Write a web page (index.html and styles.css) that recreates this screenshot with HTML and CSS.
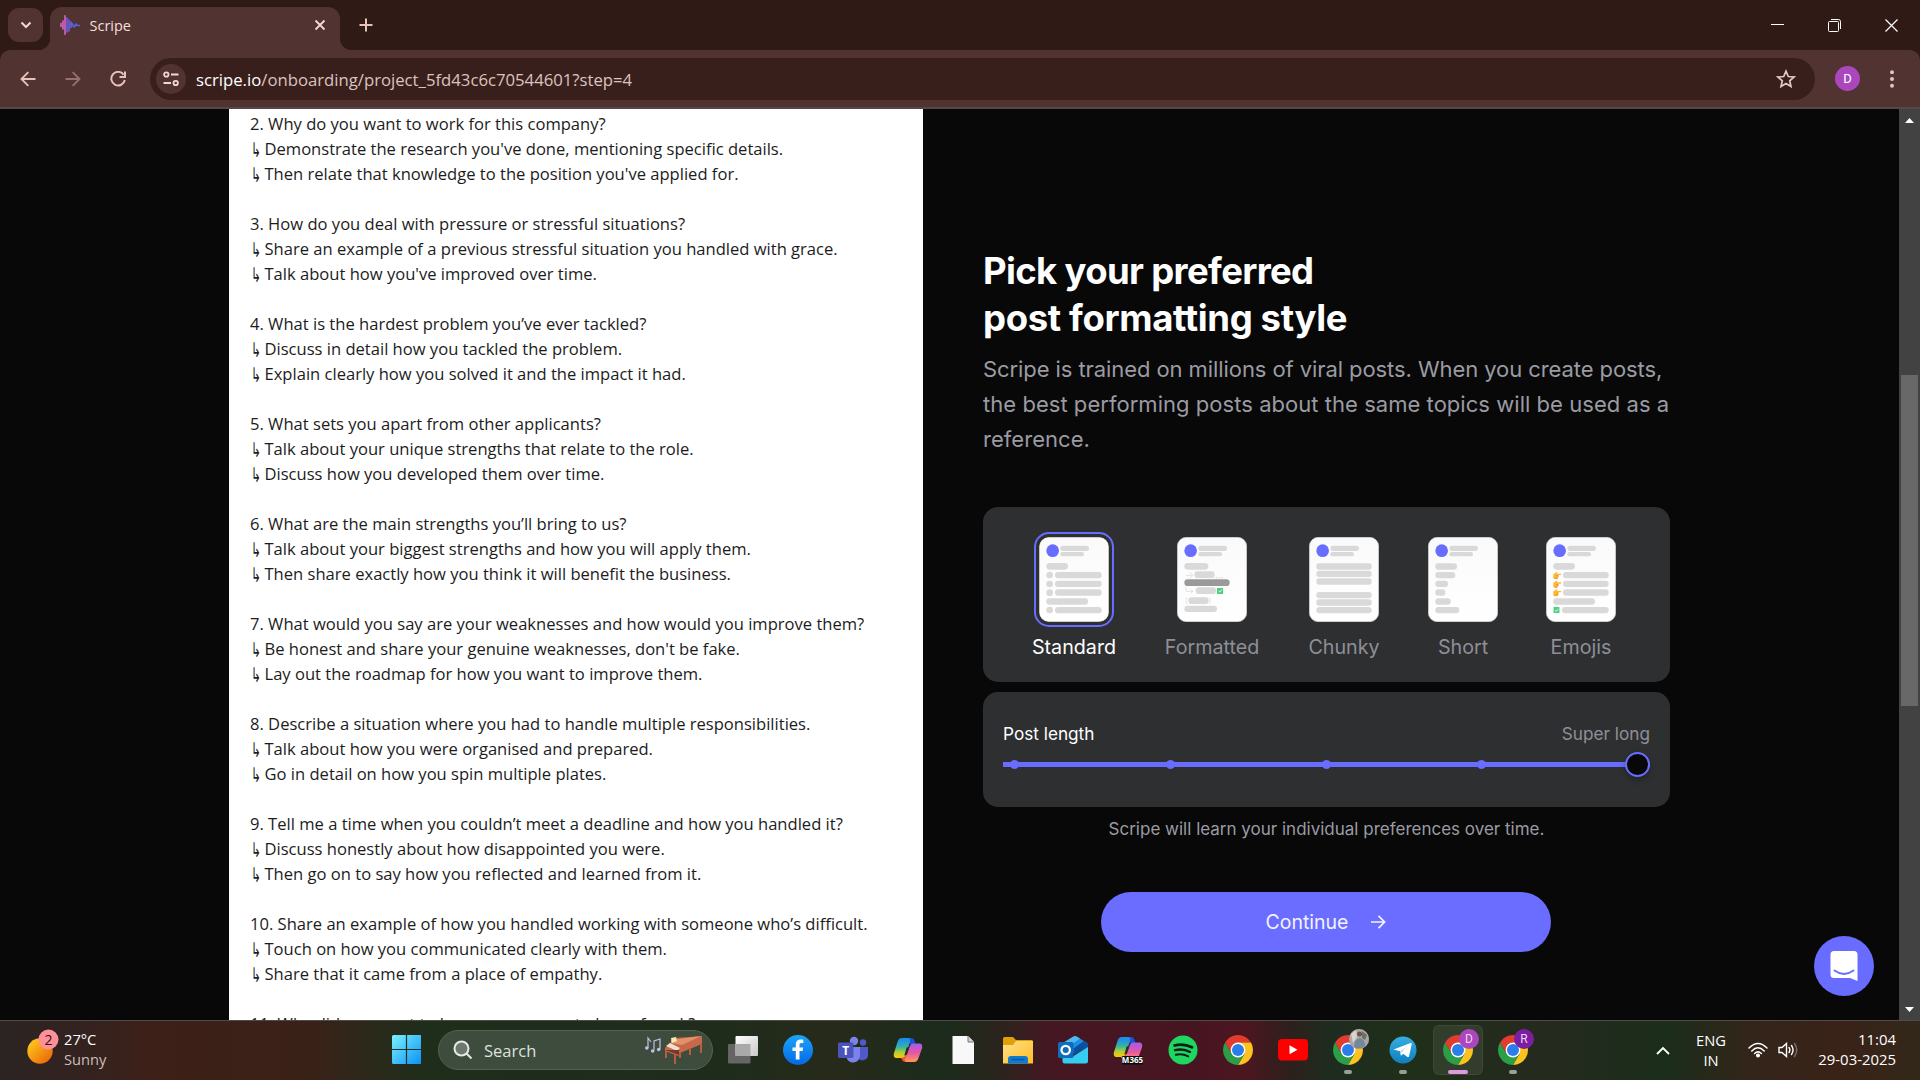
FILE: index.html
```html
<!DOCTYPE html>
<html lang="en">
<head>
<meta charset="utf-8">
<title>Scripe</title>
<link rel="stylesheet" href="styles.css">
</head>
<body>
<svg class="defs" width="0" height="0" aria-hidden="true">
  <defs>
    <linearGradient id="sun" x1="0" y1="0" x2="1" y2="1"><stop offset=".1" stop-color="#ffc81e"/><stop offset="1" stop-color="#e85c06"/></linearGradient>
    <linearGradient id="win" x1="0" y1="0" x2="1" y2="1"><stop offset="0" stop-color="#7cf0ff"/><stop offset="1" stop-color="#0a93f5"/></linearGradient>
    <linearGradient id="fb" x1="0" y1="0" x2="0" y2="1"><stop offset="0" stop-color="#1aa5fb"/><stop offset="1" stop-color="#0668e4"/></linearGradient>
    <linearGradient id="tg" x1="0" y1="0" x2="0" y2="1"><stop offset="0" stop-color="#37aee2"/><stop offset="1" stop-color="#0e7fbf"/></linearGradient>
    <linearGradient id="cpL" x1="0" y1="0" x2="0" y2="1"><stop offset=".1" stop-color="#1d8fe8"/><stop offset=".45" stop-color="#34b3a5"/><stop offset=".72" stop-color="#b6cc35"/><stop offset="1" stop-color="#ffc60a"/></linearGradient>
    <linearGradient id="cpR" x1="0" y1="0" x2="0" y2="1"><stop offset="0" stop-color="#a05cf0"/><stop offset=".5" stop-color="#e856a5"/><stop offset="1" stop-color="#ff9a56"/></linearGradient>
    <linearGradient id="fold" x1="0" y1="0" x2="1" y2="1"><stop offset="0" stop-color="#ffe08a"/><stop offset="1" stop-color="#ffbd22"/></linearGradient>
    <linearGradient id="page" x1="0" y1="0" x2="0" y2="1"><stop offset="0" stop-color="#fafafa"/><stop offset="1" stop-color="#fff"/></linearGradient>
    <linearGradient id="front" x1="0" y1="0" x2="1" y2="1"><stop offset="0" stop-color="#fff"/><stop offset="1" stop-color="#c9c9c9"/></linearGradient>
    <symbol id="chrome" viewBox="-15 -15 30 30">
      <path fill="#e33b2e" d="M-12.99-7.5A15 15 0 0 1 12.99-7.5H0L-6.5 3.75Z"/>
      <path fill="#fcc31e" d="M12.99-7.5A15 15 0 0 1 0 15L6.5 3.75 0-7.5Z"/>
      <path fill="#2b9e47" d="M0 15A15 15 0 0 1-12.99-7.5L-6.5 3.75 6.5 3.75Z"/>
      <circle r="7.4" fill="#fff"/><circle r="6" fill="#2b7de9"/>
    </symbol>
    <symbol id="copilot" viewBox="0 0 30 30">
      <path fill="#1a53d8" d="M9 3h9c2 0 3 1 3.500 3l1 3h-6l-3 3z"/>
      <path fill="url(#cpL)" d="M9 3h6c2 0 2.500 2 2 3.500L13 20c-.7 2-2 3-4 3H4c-3 0-3.700-2-3-5L4.500 7C5.300 4.500 6.500 3 9 3z"/>
      <path fill="#f0562e" d="M8 23c3 0 4.500-1 5.500-4l1 3 3 1 3 4h-8c-3 0-3.500-3-4.500-4z"/>
      <path fill="url(#cpR)" d="M21 27h-7c-2 0-2.500-2-2-3.500L16.500 12c.8-2.500 2-3.500 4-3.500H26c3 0 3.700 2 3 5L25.500 23c-.8 2.500-2 4-4.500 4z"/>
      <path fill="#263322" d="M13.500 12.500l3-.5-2.700 8-2.500.5z"/>
    </symbol>
    <symbol id="head" viewBox="0 0 210 255">
      <rect x="1" y="1" width="208" height="253" rx="27" fill="url(#page)" stroke="#d2d2d2" stroke-width="2"/>
      <circle cx="41" cy="41" r="19" fill="#686cff"/>
      <rect x="64" y="26" width="86" height="16" rx="8" fill="#d9d9d9"/>
      <rect x="64" y="45" width="71" height="13" rx="6.500" fill="#d9d9d9"/>
    </symbol>
    <symbol id="hand" viewBox="0 0 26 22">
      <path fill="#fdb833" d="M2 7l7-4 3-3 2 2-2 4h12c3 0 3 4 0 4h-7l1 3-1 3-1 4-3 2H6l-4-3z"/><path fill="#e8862a" d="M11 11h6v2h-6zM11 15h6v1.500h-6zM3 18l3 4h7l2-2H7z"/>
    </symbol>
    <symbol id="check" viewBox="0 0 20 20"><rect width="20" height="20" rx="1" fill="#4fcf80"/><path d="M5 10l4 4 6-8" fill="none" stroke="#fff" stroke-width="2.500"/></symbol>
  </defs>
</svg>

<header class="browser">
  <div class="tabstrip">
    <div class="tab-search"><svg width="12" height="8" viewBox="0 0 12 8"><path d="M1.500 1.500L6 6l4.500-4.500" fill="none" stroke="#f3d9d5" stroke-width="2"/></svg></div>
    <div class="tab">
      <svg class="favicon" width="20" height="20" viewBox="0 0 20 20" fill="none" stroke-linecap="round" stroke-width="1.600"><path d="M1 8.500v3M3 6v8M5 .8v18.400" stroke="#d765c4"/><path d="M7 3v14M9 5v11M11 7v5.500" stroke="#6b60dd"/><path d="M11 10c1.500-5 2 4 3.500 1.500S15.500 8 17 10.500h2.500" stroke="#5a62e0"/></svg>
      <span class="tab-title">Scripe</span>
      <svg width="12" height="12" viewBox="0 0 12 12"><path d="M1.500 1.500l9 9M10.500 1.500l-9 9" stroke="#f3d9d5" stroke-width="1.800"/></svg>
    </div>
    <svg class="newtab" width="14" height="14" viewBox="0 0 14 14"><path d="M7 .5v13M.5 7h13" stroke="#e8c1ba" stroke-width="2"/></svg>
    <div class="window-buttons">
      <svg width="13" height="13" viewBox="0 0 13 13"><path d="M0 5.500h13" stroke="#fff"/></svg>
      <svg width="13" height="13" viewBox="0 0 13 13" fill="none" stroke="#fff"><rect x=".5" y="2.500" width="10" height="10" rx="1"/><path d="M3 .5h7.500a2 2 0 0 1 2 2V10"/></svg>
      <svg width="13" height="13" viewBox="0 0 13 13"><path d="M.5.5l12 12M12.500.5l-12 12" stroke="#fff" stroke-width="1.200"/></svg>
    </div>
  </div>
  <div class="toolbar">
    <svg width="16" height="16" viewBox="0 0 16 16" fill="none" stroke="#e8c1ba" stroke-width="1.900"><path d="M15.500 8H2M8.300 1.200L1.500 8l6.800 6.800"/></svg>
    <svg width="16" height="16" viewBox="0 0 16 16" fill="none" stroke="#94716c" stroke-width="1.900"><path d="M.5 8H14M7.700 1.200L14.500 8l-6.800 6.800"/></svg>
    <svg width="16" height="16" viewBox="0 0 16 16" fill="none" stroke="#e8c1ba" stroke-width="2"><path d="M13.600 3.600A6.800 6.800 0 1 0 14.800 9M15 .5v5.500H9.500"/></svg>
    <div class="omnibox">
      <div class="site-info"><svg width="16" height="16" viewBox="0 0 16 16" fill="none" stroke="#f3d9d5" stroke-width="1.800"><circle cx="3.300" cy="3.500" r="2.200"/><path d="M8 3.500h7.500M.5 12h7.500"/><circle cx="12.700" cy="12" r="2.200"/></svg></div>
      <div class="url"><b>scripe.io</b>/onboarding/project_5fd43c6c70544601?step=4</div>
      <svg width="20" height="20" viewBox="0 0 20 20" fill="none" stroke="#e2c7c3" stroke-width="1.700"><path d="M10 2.200l2.300 5.300 5.800.5-4.400 3.800 1.300 5.700-5-3-5 3 1.300-5.700L1.900 8l5.800-.5z"/></svg>
    </div>
    <div class="profile">D</div>
    <svg class="kebab" width="4" height="18" viewBox="0 0 4 18" fill="#e8c1ba"><circle cx="2" cy="2.200" r="2"/><circle cx="2" cy="9" r="2"/><circle cx="2" cy="15.800" r="2"/></svg>
  </div>
</header>

<main class="viewport">
  <article class="post">
    <p>2. Why do you want to work for this company?</p>
    <p><i>↳</i>Demonstrate the research you've done, mentioning specific details.</p>
    <p><i>↳</i>Then relate that knowledge to the position you've applied for.</p>
    <p></p>
    <p>3. How do you deal with pressure or stressful situations?</p>
    <p><i>↳</i>Share an example of a previous stressful situation you handled with grace.</p>
    <p><i>↳</i>Talk about how you've improved over time.</p>
    <p></p>
    <p>4. What is the hardest problem you’ve ever tackled?</p>
    <p><i>↳</i>Discuss in detail how you tackled the problem.</p>
    <p><i>↳</i>Explain clearly how you solved it and the impact it had.</p>
    <p></p>
    <p>5. What sets you apart from other applicants?</p>
    <p><i>↳</i>Talk about your unique strengths that relate to the role.</p>
    <p><i>↳</i>Discuss how you developed them over time.</p>
    <p></p>
    <p>6. What are the main strengths you’ll bring to us?</p>
    <p><i>↳</i>Talk about your biggest strengths and how you will apply them.</p>
    <p><i>↳</i>Then share exactly how you think it will benefit the business.</p>
    <p></p>
    <p>7. What would you say are your weaknesses and how would you improve them?</p>
    <p><i>↳</i>Be honest and share your genuine weaknesses, don't be fake.</p>
    <p><i>↳</i>Lay out the roadmap for how you want to improve them.</p>
    <p></p>
    <p>8. Describe a situation where you had to handle multiple responsibilities.</p>
    <p><i>↳</i>Talk about how you were organised and prepared.</p>
    <p><i>↳</i>Go in detail on how you spin multiple plates.</p>
    <p></p>
    <p>9. Tell me a time when you couldn’t meet a deadline and how you handled it?</p>
    <p><i>↳</i>Discuss honestly about how disappointed you were.</p>
    <p><i>↳</i>Then go on to say how you reflected and learned from it.</p>
    <p></p>
    <p>10. Share an example of how you handled working with someone who’s difficult.</p>
    <p><i>↳</i>Touch on how you communicated clearly with them.</p>
    <p><i>↳</i>Share that it came from a place of empathy.</p>
    <p></p>
    <p>11. Why did you want to leave your current place of work?</p>
  </article>

  <section class="panel">
    <h1><span>Pick your preferred</span><br>post formatting style</h1>
    <p class="lead"><span>Scripe is trained on millions of viral posts. When you create posts,</span><br>the best performing posts about the same topics will be used as a<br>reference.</p>

    <div class="card styles">
      <div class="style selected standard">
        <svg width="70" height="85" viewBox="0 0 210 255" fill="#d9d9d9"><use href="#head"/><rect x="22" y="78" width="65" height="20" rx="10"/><circle cx="32" cy="114" r="10"/><circle cx="32" cy="141" r="10"/><circle cx="32" cy="167" r="10"/><circle cx="32" cy="219" r="10"/><rect x="48" y="105" width="140" height="19" rx="9"/><rect x="48" y="131" width="140" height="19" rx="9"/><rect x="48" y="157" width="140" height="19" rx="9"/><rect x="22" y="184" width="125" height="19" rx="9"/><rect x="48" y="210" width="140" height="19" rx="9"/></svg>
        <span>Standard</span>
      </div>
      <div class="style formatted">
        <svg width="70" height="85" viewBox="0 0 210 255" fill="#d9d9d9"><use href="#head"/><rect x="22" y="78" width="72" height="20" rx="10"/><rect x="52" y="103" width="61" height="20" rx="10"/><rect x="22" y="127" width="136" height="20" rx="10" fill="#9a9a9a"/><rect x="56" y="151" width="61" height="20" rx="10"/><rect x="34" y="181" width="61" height="20" rx="10"/><rect x="22" y="206" width="98" height="19" rx="9"/><path d="M27 115h20M38 106l10 9-10 9M27 151v12h20M41 157l7 6-7 6M29 182q-4 9 0 19M98 182q4 9 0 19" fill="none" stroke="#dcdcdc" stroke-width="2.500"/><path d="M116 120h4v4h-4zM124 120h4v4h-4zM132 120h4v4h-4z"/><use href="#check" x="120" y="152" width="19" height="19"/></svg>
        <span>Formatted</span>
      </div>
      <div class="style chunky">
        <svg width="70" height="85" viewBox="0 0 210 255" fill="#d9d9d9"><use href="#head"/><rect x="22" y="79" width="166" height="19" rx="9"/><rect x="22" y="101" width="166" height="19" rx="9"/><rect x="22" y="124" width="166" height="19" rx="9"/><rect x="22" y="165" width="166" height="19" rx="9"/><rect x="22" y="187" width="166" height="19" rx="9"/><rect x="22" y="210" width="166" height="19" rx="9"/></svg>
        <span>Chunky</span>
      </div>
      <div class="style">
        <svg width="70" height="85" viewBox="0 0 210 255" fill="#d9d9d9"><use href="#head"/><rect x="22" y="79" width="65" height="19" rx="9"/><rect x="22" y="105" width="60" height="19" rx="9"/><rect x="22" y="131" width="38" height="19" rx="9"/><rect x="22" y="157" width="30" height="19" rx="9"/><rect x="22" y="184" width="46" height="19" rx="9"/><rect x="22" y="210" width="72" height="19" rx="9"/></svg>
        <span>Short</span>
      </div>
      <div class="style emojis">
        <svg width="70" height="85" viewBox="0 0 210 255" fill="#d9d9d9"><use href="#head"/><rect x="22" y="78" width="65" height="20" rx="10"/><use href="#hand" x="20" y="104" width="26" height="22"/><use href="#hand" x="20" y="130" width="26" height="22"/><use href="#hand" x="20" y="156" width="26" height="22"/><rect x="51" y="105" width="137" height="19" rx="9"/><rect x="51" y="131" width="137" height="19" rx="9"/><rect x="51" y="157" width="137" height="19" rx="9"/><rect x="22" y="184" width="125" height="19" rx="9"/><use href="#check" x="22" y="210" width="19" height="19"/><rect x="48" y="210" width="140" height="19" rx="9"/></svg>
        <span>Emojis</span>
      </div>
    </div>

    <div class="card length">
      <div class="length-row"><span>Post length</span><span class="muted">Super long</span></div>
      <div class="slider"><i></i><i></i><i></i><i></i><b></b></div>
    </div>

    <p class="note">Scripe will learn your individual preferences over time.</p>
    <div class="continue">Continue<svg width="16" height="16" viewBox="0 0 16 16" fill="none" stroke="#f3f3ff" stroke-width="1.700"><path d="M1 8h13.500M8.500 1.800L14.600 8l-6.100 6.200"/></svg></div>
  </section>

  <div class="scrollbar">
    <svg width="9" height="5" viewBox="0 0 9 5"><path d="M0 5L4.500 0 9 5z" fill="#fff"/></svg>
    <div class="thumb"></div>
    <svg width="9" height="5" viewBox="0 0 9 5"><path d="M0 0l4.500 5L9 0z" fill="#fff"/></svg>
  </div>

  <div class="chat"><svg width="28" height="32" viewBox="0 0 28 32"><path d="M4 1h20a3.500 3.500 0 0 1 3.500 3.500V31l-7.500-3H4a3.500 3.500 0 0 1-3.500-3.500v-20A3.500 3.500 0 0 1 4 1z" fill="#fff"/><path d="M4.500 20.500q9.500 7 19 0" fill="none" stroke="#686cff" stroke-width="1.800" stroke-linecap="round"/></svg></div>
</main>

<footer class="taskbar">
  <div class="weather">
    <svg width="42" height="40" viewBox="0 0 42 40"><circle cx="14" cy="23" r="12.700" fill="url(#sun)"/><circle cx="22.500" cy="11.500" r="10" fill="#ff8f98"/><text x="22.500" y="17" text-anchor="middle" class="badge-num">2</text></svg>
    <div><div>27°C</div><div class="dim">Sunny</div></div>
  </div>
  <svg class="start" width="30" height="30" viewBox="0 0 30 30" fill="url(#win)"><path d="M0 1.500A1.500 1.500 0 0 1 1.500 0H29v29H1.500A1.500 1.500 0 0 1 0 27.500z"/><path d="M14.500 0v29M0 14.500h29" stroke="#1f2d1d" stroke-width="1.200"/></svg>
  <div class="search">
    <svg width="20" height="20" viewBox="0 0 20 20" fill="none" stroke="#e6eae6" stroke-width="2"><circle cx="8.500" cy="8.500" r="7" fill="#6c776d"/><path d="M13.500 13.500l5 5"/></svg>
    <span>Search</span>
    <svg width="60" height="30" viewBox="0 0 60 30"><g fill="none" stroke="#c3bfe8" stroke-width="1.200"><path d="M4 13V3l3 4M10 15V6l6-2v10"/></g><g fill="#c3bfe8"><circle cx="2.800" cy="13" r="1.800"/><circle cx="8.700" cy="16" r="1.800"/><circle cx="14.700" cy="14.500" r="1.800"/></g><path d="M21 13L31 3l27-2v8l-22 9-2 3-13-5z" fill="#c5694a"/><path d="M27 5l30-4-19 9-11-2z" fill="#e3916a"/><path d="M22 11l4-3 10 5-3 3z" fill="#f1dfd2"/><path d="M27 3l5-1 1 4-5 2z" fill="#f5e9b8"/><path d="M21 15l14 5V15z" fill="#7c3626"/><path d="M22 16v7M31 19v10M36 17v6M57 8v10M46 13v7" stroke="#bb5c42" stroke-width="2"/></svg>
  </div>
  <nav class="apps">
    <div class="app"><svg width="30" height="30" viewBox="0 0 30 30"><rect y="9" width="22.500" height="19.500" rx="1" fill="#656565"/><rect x="7.500" y="1" width="22.500" height="20" rx="1" fill="url(#front)"/><path d="M7.500 9h15v12h-15z" fill="#a9a9a9"/></svg></div>
    <div class="app"><svg width="30" height="30" viewBox="0 0 30 30"><circle cx="15" cy="15" r="15" fill="url(#fb)"/><path d="M12.800 24.500v-8.500H9.500v-3.600h3.300V10c0-3.700 2-5.400 5-5.400 1 0 2 .1 2.500.2v3.300h-1.800c-1.500 0-2 .8-2 2v2.300h3.700l-.6 3.600h-3.100v8.500z" fill="#fff"/></svg></div>
    <div class="app"><svg width="30" height="30" viewBox="0 0 30 30"><circle cx="16" cy="6" r="4.200" fill="#7b83eb"/><circle cx="25" cy="7.500" r="3.200" fill="#5059c9"/><path d="M20 12h10v8a5.500 5.500 0 0 1-10 3z" fill="#5059c9"/><path d="M9 12h13v9a7 7 0 0 1-13 3z" fill="#7b83eb"/><rect y="7.500" width="15.500" height="15.500" rx="1.500" fill="#4b53bc"/><text x="7.700" y="19.500" text-anchor="middle" class="t-teams">T</text></svg></div>
    <div class="app"><svg width="30" height="30"><use href="#copilot"/></svg></div>
    <div class="app"><svg width="30" height="30" viewBox="0 0 30 30"><path d="M4.500 1H20l6 6v22H4.500z" fill="#f8f8f8"/><path d="M20 1v6h6" fill="#d5d5d5" stroke="#555" stroke-width=".8"/></svg></div>
    <div class="app"><svg width="30" height="30" viewBox="0 0 30 30"><path d="M0 3.500A1.500 1.500 0 0 1 1.500 2H10l3 3h15.500A1.500 1.500 0 0 1 30 6.500V15H0z" fill="#e0a008"/><path d="M0 10h10l3-4h17v22.500H0z" fill="url(#fold)"/><path d="M5 28.500V24a3 3 0 0 1 3-3h14a3 3 0 0 1 3 3v4.500z" fill="#0f7bd0"/><path d="M8.500 24.500h13" stroke="#085a9e" stroke-width="1.500"/></svg></div>
    <div class="app"><svg width="30" height="30" viewBox="0 0 30 30"><path d="M4 8.500l11.500-7a3 3 0 0 1 3 0L30 8.500 17 18H4z" fill="#1a8fe3"/><path d="M4 8.500l11.500-7a3 3 0 0 1 3 0l3.500 2L10 12z" fill="#50b8f0"/><path d="M15.500 13.500L26 6l4 2.500v4L15.500 20z" fill="#0b4f9e"/><path d="M30 12v14a2.500 2.500 0 0 1-2.500 2.500H7a2.500 2.500 0 0 1-2.500-2.500V22H14z" fill="#35cdf2"/><rect y="7" width="15.500" height="16" rx="1.500" fill="#0f6cbd"/><circle cx="7.700" cy="15" r="4.200" fill="none" stroke="#fff" stroke-width="2.300"/></svg></div>
    <div class="app"><svg width="30" height="30" viewBox="0 0 30 30"><use href="#copilot" y="-1"/><rect x="9" y="21" width="21" height="8.500" rx="1" fill="#0a0a0a"/><text x="19.500" y="28.200" text-anchor="middle" class="t-m365">M365</text></svg></div>
    <div class="app"><svg width="30" height="30" viewBox="0 0 30 30"><circle cx="15" cy="15" r="14.500" fill="#1ed760"/><g fill="none" stroke="#111c14" stroke-linecap="round"><path d="M6.500 10.500q9-2.500 17.500 1.800" stroke-width="2.700"/><path d="M7 15.200q8-2 15 1.700" stroke-width="2.300"/><path d="M7.800 19.700q6.500-1.500 12.500 1.700" stroke-width="1.900"/></g></svg></div>
    <div class="app"><svg width="30" height="30"><use href="#chrome"/></svg></div>
    <div class="app"><svg width="30" height="30" viewBox="0 0 30 30"><rect y="4" width="30" height="21.500" rx="4" fill="#f00"/><path d="M11.500 10.300v9l8-4.500z" fill="#fff"/></svg></div>
    <div class="app running"><svg width="30" height="30"><use href="#chrome"/></svg><em class="photo"><svg width="20" height="20" viewBox="0 0 20 20"><circle cx="10" cy="10" r="10" fill="#a9a8a6"/><path d="M2 5l5-4 1 7-4 6z" fill="#d8d4cc"/><path d="M13 2l5 4-2 5-3-2z" fill="#6d6e66"/><path d="M5 18q0-8 6-9 5 1 5 8-5 4-11 1z" fill="#75879a"/><circle cx="10.500" cy="5" r="2.500" fill="#6f5345"/></svg></em></div>
    <div class="app running"><svg width="30" height="30" viewBox="0 0 30 30"><circle cx="15" cy="15" r="13.500" fill="url(#tg)"/><path d="M5.500 14.500L22.500 8c.8-.3 1.400.2 1.200 1.200l-2.600 12c-.2 1-.9 1.100-1.600.7l-4.300-3.200-2.200 2.100-.8-4.600z" fill="#fff"/><path d="M12 16.500l7.500-5.500-6 6.500-.8 3z" fill="#bcd9ea"/></svg></div>
    <div class="app running active"><svg width="30" height="30"><use href="#chrome"/></svg><em>D</em></div>
    <div class="app running"><svg width="30" height="30"><use href="#chrome"/></svg><em class="deep">R</em></div>
  </nav>
  <div class="tray">
    <svg width="14" height="9" viewBox="0 0 14 9"><path d="M1 8l6-6 6 6" fill="none" stroke="#fff" stroke-width="1.900"/></svg>
    <div class="lang">ENG<br>IN</div>
    <svg class="wifi" width="20" height="16" viewBox="0 0 20 16" fill="none" stroke="#fff" stroke-width="1.500" stroke-linecap="round"><path d="M1 6q9-9 18 0M3.800 9q6.200-6.300 12.400 0M6.600 11.500q3.400-3.200 6.800 0"/><circle cx="10" cy="13.500" r="1.300" fill="#fff"/></svg>
    <svg class="speaker" width="20" height="16" viewBox="0 0 20 16" fill="none" stroke="#fff" stroke-width="1.400" stroke-linecap="round"><path d="M1 5.500h3L8.500 1.500v13L4 10.500H1zM11 5.500q1.800 2.500 0 5M13.500 3.500q3.200 4.500 0 9"/><path d="M16.500 1.500q4.500 6.500 0 13" stroke="#7b6e66"/></svg>
    <div class="clock">11:04<br>29-03-2025</div>
  </div>
</footer>
</body>
</html>
```
FILE: styles.css
```css
* { box-sizing: border-box; }
body { margin: 0; width: 1920px; height: 1080px; overflow: hidden; display: flex; flex-direction: column; background: #080808; font-family: "Open Sans", "Noto Sans", sans-serif; }
p, h1 { margin: 0; }
svg { display: block; flex: none; }
.defs { position: absolute; }

/* Browser frame */
.browser { height: 109px; flex: none; background: #301a16; border-bottom: 2px solid #564846; }
.tabstrip { height: 50px; display: flex; align-items: center; padding: 0 22px 0 8px; }
.tab-search { width: 35px; height: 34px; border-radius: 11px; background: #513331; display: flex; align-items: center; justify-content: center; }
.tab { position: relative; align-self: flex-end; margin-left: 7px; width: 290px; height: 43px; padding: 0 14px 8px 10px; border-radius: 12px 12px 0 0; background: #513331; display: flex; align-items: center; color: #f5dfdb; font-size: 14.5px; }
.tab::before, .tab::after { content: ""; position: absolute; bottom: 0; width: 12px; height: 12px; }
.tab::before { left: -12px; background: radial-gradient(circle at 0 0, transparent 12px, #513331 12.500px); }
.tab::after { right: -12px; background: radial-gradient(circle at 100% 0, transparent 12px, #513331 12.500px); }
.favicon { margin-right: 9.5px; }
.tab-title { flex: 1; padding-top: 1px; }
.newtab { margin-left: 19px; }
.window-buttons { margin-left: auto; display: flex; gap: 44px; }
.toolbar { height: 57px; background: #513331; border-radius: 10px 10px 0 0; display: flex; align-items: center; padding: 0 26px 0 20px; }
.toolbar > svg { margin-right: 29px; }
.omnibox { width: 1665px; height: 42px; margin-left: -5px; border-radius: 21px; background: #391f1c; display: flex; align-items: center; padding: 0 19px 0 6px; }
.site-info { width: 30px; height: 30px; border-radius: 50%; background: #513331; display: flex; align-items: center; justify-content: center; }
.url { flex: 1; margin-left: 10px; padding-top: 2px; font-size: 16.72px; line-height: 24px; color: #dcc3bf; }
.url b { font-weight: 400; color: #fff; }
.profile { width: 25px; height: 25px; margin-left: 20px; border-radius: 50%; background: #ab47bc; color: #fff; font: 13px/25px Roboto, sans-serif; text-align: center; }
.toolbar > .kebab { margin: 0 0 0 30px; }

/* Page */
.viewport { position: relative; height: 911px; flex: none; display: flex; overflow: hidden; background: #080808; }
.post { width: 694px; margin-left: 229px; padding: 2px 0 0 21px; background: #fff; color: #1c1c1c; font-size: 16.57px; line-height: 25px; white-space: nowrap; }
.post p { height: 25px; }
.post i { display: inline-block; width: 14.5px; height: 16px; font: 15px/16px "DejaVu Sans", sans-serif; transform: translate(1px, -1.2px) scale(.8, 1.35); transform-origin: 0 87.5%; vertical-align: -4px; }
.panel { width: 747px; padding: 139px 0 0 60px; font-family: Inter, sans-serif; color: #fff; white-space: nowrap; }
h1 { font-size: 36.5px; line-height: 47px; font-weight: 650; letter-spacing: -.36px; }
h1 span { letter-spacing: -.65px; }
.lead { margin-top: 10px; font-size: 22px; line-height: 35px; letter-spacing: .04px; color: #9b9ba3; }
.lead span { letter-spacing: -.08px; }
.card { width: 687px; background: #2e2f31; border-radius: 15px; }
.styles { height: 175px; margin-top: 50px; padding: 30px 0 0 49px; display: flex; gap: 49px; }
.style { width: 70px; display: flex; flex-direction: column; align-items: center; color: #8e8f97; font-size: 19.7px; line-height: 24px; }
.standard { width: 84px; }
.formatted { width: 94px; }
.chunky { margin-left: 1px; }
.emojis { margin-left: -1px; }
.style span { margin-top: 13px; }
.selected { color: #fff; }
.selected svg { border-radius: 10px; outline: 2px solid #686cff; outline-offset: 3px; }
.length { height: 115px; margin-top: 10px; padding: 31px 20px 0; }
.length-row { display: flex; justify-content: space-between; font-size: 17.2px; line-height: 22px; }
.muted { color: #8e8f97; }
.slider { height: 25px; margin-top: 7px; display: flex; align-items: center; justify-content: space-between; padding-left: 7px; background: linear-gradient(#686cff, #686cff) 0 50% / 100% 5px no-repeat; border-radius: 3px; }
.slider i { width: 9px; height: 9px; border-radius: 50%; background: #686cff; }
.slider b { width: 25px; height: 25px; margin-left: -8px; border-radius: 50%; border: 2.500px solid #686cff; background: #080808; box-shadow: 0 3px 6px rgba(0, 0, 0, .25); }
.note { margin-top: 11px; width: 687px; text-align: center; font-size: 17px; line-height: 22px; color: #9b9ba3; }
.continue { width: 450px; height: 60px; margin: 52px 0 0 118px; border-radius: 30px; background: #6a6dff; color: #f3f3ff; font-size: 19.5px; display: flex; align-items: center; justify-content: center; gap: 22px; }
.scrollbar { width: 21px; margin-left: auto; padding: 9px 0 8px; background: #424242; display: flex; flex-direction: column; align-items: center; }
.thumb { width: 17px; height: 331px; margin: 252px 0 auto; background: #686868; }
.chat { position: absolute; left: 1814px; top: 827px; width: 60px; height: 60px; border-radius: 50%; background: #686cff; display: flex; align-items: center; justify-content: center; }

/* Taskbar */
.taskbar { height: 60px; flex: none; border-top: 1px solid #4f4c46; padding-bottom: 1px; display: flex; align-items: center; color: #fff; font-size: 14.7px; line-height: 20px;
  background: linear-gradient(90deg, #2b2423 0, #35221f 95px, #3d2018 150px, #3a2118 310px, #2b291a 370px, #1e2e1b 430px, #1f2c1c 730px, #272a1a 830px, #1b2b1c 945px, #2b241d 1000px, #451723 1050px, #471521 1200px, #4c1620 1245px, #2d201c 1290px, #1d2c1f 1330px, #1f2f19 1410px, #252a1e 1540px, #1b2d1b 1665px, #33251a 1750px, #3a2218 1840px, #32281a 1920px); }
.weather { width: 392px; padding-left: 26px; display: flex; align-items: center; }
.weather svg { margin: -4px -4px 0 0; }
.weather > div { margin-top: -2px; }
.dim { color: #c9bebb; }
.badge-num { font: 14px "Open Sans", sans-serif; fill: #2b1113; }
.search { width: 275px; height: 40px; margin-left: 16px; padding: 0 8px 0 14px; border: 1px solid #536253; border-radius: 20px; background: #3d4c3d; display: flex; align-items: center; font-size: 16.5px; color: #dde2dd; }
.search span { flex: 1; margin-left: 11px; padding-top: 1px; }
.apps { display: flex; gap: 5px; margin-left: 5px; }
.app { position: relative; width: 50px; height: 50px; border-radius: 6px; display: flex; align-items: center; justify-content: center; }
.active { background: rgba(255, 255, 255, .08); box-shadow: inset 0 0 0 1px rgba(255, 255, 255, .06); }
.running::after { content: ""; position: absolute; left: 21px; bottom: 1px; width: 8px; height: 4px; border-radius: 2px; background: #9a9f97; }
.active::after { left: 15px; width: 20px; background: #dd9ae0; }
.app em { position: absolute; left: 26px; top: 4px; width: 20px; height: 20px; border-radius: 50%; background: #ab47bc; color: #f0d4f4; font: 12px/20px Roboto, sans-serif; text-align: center; }
.app em.deep { background: #7b1fa2; }
.t-teams { font: 700 12px "Open Sans", sans-serif; fill: #fff; }
.t-m365 { font: 700 8px "Open Sans", sans-serif; fill: #fff; }
.tray { margin-left: auto; padding-right: 24px; display: flex; align-items: center; }
.lang { width: 40px; margin: -1px 0 0 21px; text-align: center; }
.wifi { margin-left: 17px; }
.speaker { margin-left: 10px; }
.clock { width: 98px; margin-top: -2px; text-align: right; font-size: 14.9px; }
```
